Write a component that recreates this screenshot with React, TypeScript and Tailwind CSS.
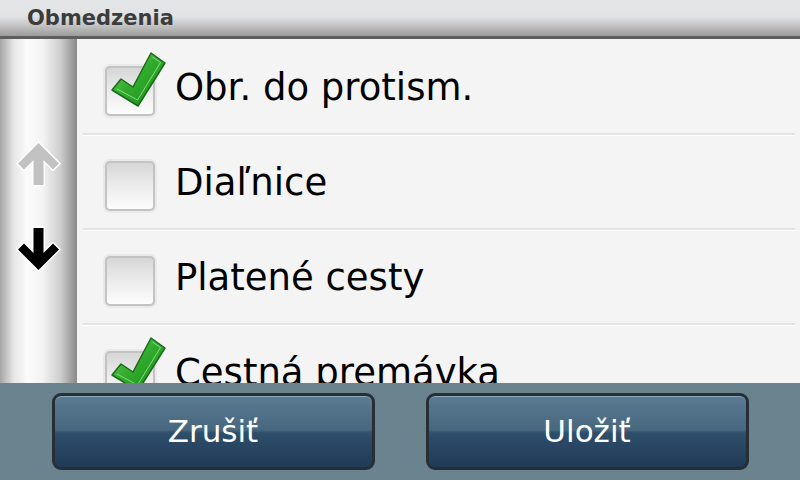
import React from 'react';

interface Item {
    label: string;
    checked: boolean;
}

const items: Item[] = [
    { label: 'Obr. do protism.', checked: true },
    { label: 'Diaľnice', checked: false },
    { label: 'Platené cesty', checked: false },
    { label: 'Cestná premávka', checked: true },
];

const Arrow: React.FC<{ down?: boolean; color: string }> = ({ down, color }) => (
    <svg width="47" height="46" viewBox="0 0 47 46" className={down ? 'rotate-180' : ''}>
        <path
            d="M23.5 2 L44 22.5 L38 28.5 L28.5 19 L28.5 44 L18.5 44 L18.5 19 L9 28.5 L3 22.5 Z"
            fill={color}
            stroke="#ffffff"
            strokeWidth={3}
            strokeLinejoin="miter"
            paintOrder="stroke"
        />
    </svg>
);

const Check: React.FC = () => (
    <svg width="60" height="60" viewBox="0 0 60 60" className="absolute left-[7px] top-[-14px]">
        <defs>
            <linearGradient id="chk" x1="0" y1="0" x2="1" y2="1">
                <stop offset="0" stopColor="#72d86c" />
                <stop offset="0.45" stopColor="#33ad2e" />
                <stop offset="1" stopColor="#168a15" />
            </linearGradient>
        </defs>
        <path
            d="M41 3 L55 13 L28 56 L2 40 L11 29 L23 37 Z"
            fill="url(#chk)"
            stroke="#1a6a19"
            strokeWidth={1.5}
            strokeLinejoin="round"
        />
        <path d="M42.5 7 L50.5 12.5 L27.5 50 L7 39" fill="none" stroke="#a6eba0" strokeWidth={1} opacity={0.75} />
    </svg>
);

const Row: React.FC<{ item: Item }> = ({ item }) => (
    <div className="flex flex-col">
        <div className="h-[92px] flex items-center pl-[26px]">
            <div className="relative w-[54px] h-[54px] mt-[7px] shrink-0 rounded-[7px] bg-[#e9e9e9] p-[2px]">
                <div className="w-full h-full rounded-[5px] border-2 border-[#c3c3c3] bg-gradient-to-b from-[#d6d6d6] via-[#ececec] to-[#fcfcfc]" />
                {item.checked && <Check />}
            </div>
            <span className="ml-[18px] text-[37px] leading-none text-black whitespace-nowrap">{item.label}</span>
        </div>
        <div className="ml-[5px] mr-[5px] h-[2px] bg-[#e4e4e4]" />
        <div className="ml-[5px] mr-[5px] h-[1px] bg-white" />
    </div>
);

export default function App() {
    return (
        <div
            className="w-[800px] h-[480px] flex flex-col overflow-hidden bg-[#f4f4f4]"
            style={{ fontFamily: '"DejaVu Sans", "Liberation Sans", sans-serif' }}
        >
            <div className="h-[36px] shrink-0 flex items-center pl-[27px] bg-[linear-gradient(to_bottom,#e4e5e7_0%,#e2e3e5_45%,#c4c4c4_70%,#9c9c9c_100%)]">
                <span className="text-[21px] font-bold text-[#3c3c3c] leading-none">Obmedzenia</span>
            </div>
            <div className="h-[3px] shrink-0 bg-[#5e5e5e]" />

            <div className="flex-1 flex min-h-0">
                <div className="w-[77px] shrink-0 flex flex-col items-start pl-[15px] pt-[102px] gap-[39px] bg-[linear-gradient(to_right,#a6a6a6_0%,#e6e6e6_18%,#fbfbfb_35%,#f4f4f4_55%,#cfcfcf_78%,#888888_100%)]">
                    <Arrow color="#c2c2c2" />
                    <Arrow down color="#000000" />
                </div>
                <div className="flex-1 overflow-hidden bg-[#f4f4f4] pt-[2px]">
                    {items.map((it) => (
                        <Row key={it.label} item={it} />
                    ))}
                </div>
            </div>

            <div className="h-[97px] shrink-0 bg-[#6b828f] flex items-center justify-center gap-[51px]">
                {['Zrušiť', 'Uložiť'].map((t) => (
                    <button
                        key={t}
                        className="w-[323px] h-[77px] rounded-[9px] border-[3px] border-[#262f36] bg-[linear-gradient(to_bottom,#5a7b92_0%,#47677f_48%,#2e4e6a_52%,#1f3b58_100%)] shadow-[inset_0_1px_0_#8aa6b8] flex items-center justify-center"
                    >
                        <span className="text-white text-[31px] leading-none">{t}</span>
                    </button>
                ))}
            </div>
        </div>
    );
}
